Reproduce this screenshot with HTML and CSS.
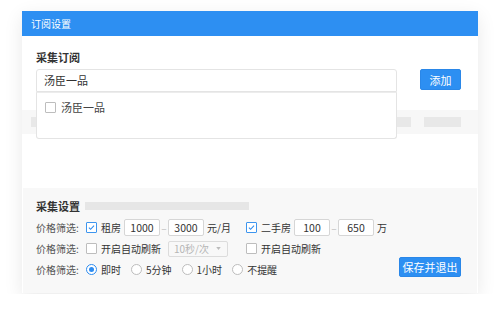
FILE: index.html
```html
<!DOCTYPE html>
<html lang="zh-CN">
<head>
    <meta charset="UTF-8">
    <title>订阅设置</title>
    <link rel="stylesheet" href="styles.css">
</head>
<body>
    <div class="panel">
        <div class="panel-head">订阅设置</div>

        <div class="sub">
            <div class="sec-title">采集订阅</div>
            <div class="add-row">
                <div class="search">
                    <div class="search-input">汤臣一品</div>
                    <div class="suggest">
                        <div class="opt"><span class="box"></span>汤臣一品</div>
                    </div>
                </div>
                <button class="btn btn-add">添加</button>
            </div>
            <div class="strip">
                <span class="ph ph-long"></span>
                <span class="ph ph-short"></span>
            </div>
        </div>

        <div class="collect">
            <div class="sec-title collect-title">采集设置<span class="ph ph-title"></span></div>

            <div class="row">
                <span class="lbl">价格筛选:</span>
                <div class="grp">
                    <span class="box on"><svg viewBox="0 0 11 11"><path d="M2.3 5.6l2.1 2.1 4.2-4.6"/></svg></span>
                    <span class="txt">租房</span>
                    <span class="num">1000</span>
                    <span class="dash">–</span>
                    <span class="num">3000</span>
                    <span class="unit">元/月</span>
                </div>
                <div class="grp">
                    <span class="box on"><svg viewBox="0 0 11 11"><path d="M2.3 5.6l2.1 2.1 4.2-4.6"/></svg></span>
                    <span class="txt">二手房</span>
                    <span class="num">100</span>
                    <span class="dash">–</span>
                    <span class="num">650</span>
                    <span class="unit">万</span>
                </div>
            </div>

            <div class="row">
                <span class="lbl">价格筛选:</span>
                <div class="grp">
                    <span class="box"></span>
                    <span class="txt">开启自动刷新</span>
                    <span class="sel">10秒/次<svg viewBox="0 0 6 4"><path d="M0 0h6L3 4z"/></svg></span>
                </div>
                <div class="grp">
                    <span class="box"></span>
                    <span class="txt">开启自动刷新</span>
                </div>
            </div>

            <div class="row">
                <span class="lbl">价格筛选:</span>
                <span class="radio on"></span><span class="txt opt-txt">即时</span>
                <span class="radio"></span><span class="txt opt-txt">5分钟</span>
                <span class="radio"></span><span class="txt opt-txt">1小时</span>
                <span class="radio"></span><span class="txt opt-txt">不提醒</span>
                <button class="btn btn-save">保存并退出</button>
            </div>
        </div>
    </div>
</body>
</html>
```

FILE: styles.css
```css
body {
    margin: 0;
    background-color: #fff;
    font-family: "Noto Sans CJK SC", "Noto Sans", sans-serif;
    color: #333;
}
.panel {
    width: 456px;
    margin: 11px 0 0 22px;
    background-color: #fff;
    box-shadow: 0 5px 18px rgba(0, 0, 0, 0.09);
}
.panel-head {
    height: 25px;
    line-height: 25px;
    padding-left: 9px;
    background-color: #2d8ff2;
    color: #fff;
    font-size: 10px;
}
.sub {
    height: 152px;
    box-sizing: border-box;
    padding: 13px 17px 0 14px;
}
.sec-title {
    font-size: 11px;
    font-weight: bold;
    line-height: 16px;
    color: #333;
}
.add-row {
    display: flex;
    align-items: flex-start;
    gap: 23px;
    margin-top: 4px;
}
.search {
    position: relative;
    flex: 1;
}
.search-input {
    height: 23px;
    box-sizing: border-box;
    border: 1px solid #e4e4e4;
    border-radius: 3px 3px 0 0;
    padding-left: 7px;
    font-size: 11px;
    line-height: 21px;
    color: #333;
}
.suggest {
    position: absolute;
    top: 100%;
    left: 0;
    right: 0;
    height: 47px;
    box-sizing: border-box;
    border: 1px solid #e4e4e4;
    border-top-color: #ececec;
    border-radius: 0 0 3px 3px;
    background-color: #fff;
    padding: 6px 0 0 8px;
}
.opt {
    display: flex;
    align-items: center;
    font-size: 11px;
    line-height: 16px;
    color: #444;
}
.opt .box {
    margin-right: 5px;
}
.btn {
    border: 1px solid #2a87e8;
    border-radius: 2px;
    background-color: #2d8ff2;
    color: #fff;
    font-family: inherit;
    font-size: 11px;
    padding: 0;
}
.btn-add {
    width: 41px;
    height: 21px;
}
.strip {
    display: flex;
    gap: 13px;
    height: 24px;
    box-sizing: border-box;
    margin: 18px -17px 0 -14px;
    padding: 7px 17px 7px 9px;
    background-color: #f7f7f7;
}
.ph {
    display: block;
    height: 10px;
    background-color: #e8e8e8;
}
.ph-long {
    flex: 1;
}
.ph-short {
    width: 37px;
}
.collect {
    height: 105px;
    box-sizing: border-box;
    margin: 0 1px 1px;
    padding: 10px 16px 0 13px;
    background-color: #f8f8f8;
}
.collect-title {
    display: flex;
    align-items: center;
    margin-bottom: 3px;
}
.ph-title {
    width: 164px;
    height: 8px;
    margin-left: 5px;
    background-color: #e6e6e6;
}
.row {
    display: flex;
    align-items: center;
    height: 21px;
    font-size: 10px;
    color: #333;
}
.lbl {
    width: 50px;
    color: #555;
}
.grp {
    display: flex;
    align-items: center;
    width: 160px;
}
.box {
    display: flex;
    width: 11px;
    height: 11px;
    box-sizing: border-box;
    border: 1px solid #bdbdbd;
    border-radius: 1px;
    background-color: #fff;
    flex-shrink: 0;
}
.box.on {
    border-color: #3d95ee;
}
.box svg {
    width: 9px;
    height: 9px;
}
.box svg path {
    fill: none;
    stroke: #2d8cf0;
    stroke-width: 1.3;
}
.txt {
    margin-left: 4px;
}
.grp .txt {
    margin-right: 3px;
}
.num {
    width: 36px;
    height: 17px;
    box-sizing: border-box;
    border: 1px solid #d6d6d6;
    border-radius: 2px;
    background-color: #fff;
    text-align: center;
    line-height: 15px;
    font-size: 10.5px;
}
.dash {
    width: 8px;
    text-align: center;
    color: #bbb;
}
.unit {
    margin-left: 3px;
}
.sel {
    display: flex;
    align-items: center;
    justify-content: space-between;
    width: 60px;
    height: 16px;
    box-sizing: border-box;
    margin-left: 4px;
    padding: 0 6px 0 5px;
    border: 1px solid #dcdcdc;
    border-radius: 2px;
    color: #b5b5b5;
}
.sel svg {
    width: 5px;
    height: 3px;
    fill: #bbb;
}
.radio {
    display: flex;
    align-items: center;
    justify-content: center;
    width: 11px;
    height: 11px;
    box-sizing: border-box;
    border: 1px solid #bdbdbd;
    border-radius: 50%;
    background-color: #fff;
    flex-shrink: 0;
}
.radio.on {
    border-color: #2d8cf0;
}
.radio.on::after {
    content: "";
    width: 5px;
    height: 5px;
    border-radius: 50%;
    background-color: #2d8cf0;
}
.opt-txt {
    margin-right: 10px;
}
.btn-save {
    width: 62px;
    height: 20px;
    margin-left: auto;
    margin-bottom: 5px;
}
```
